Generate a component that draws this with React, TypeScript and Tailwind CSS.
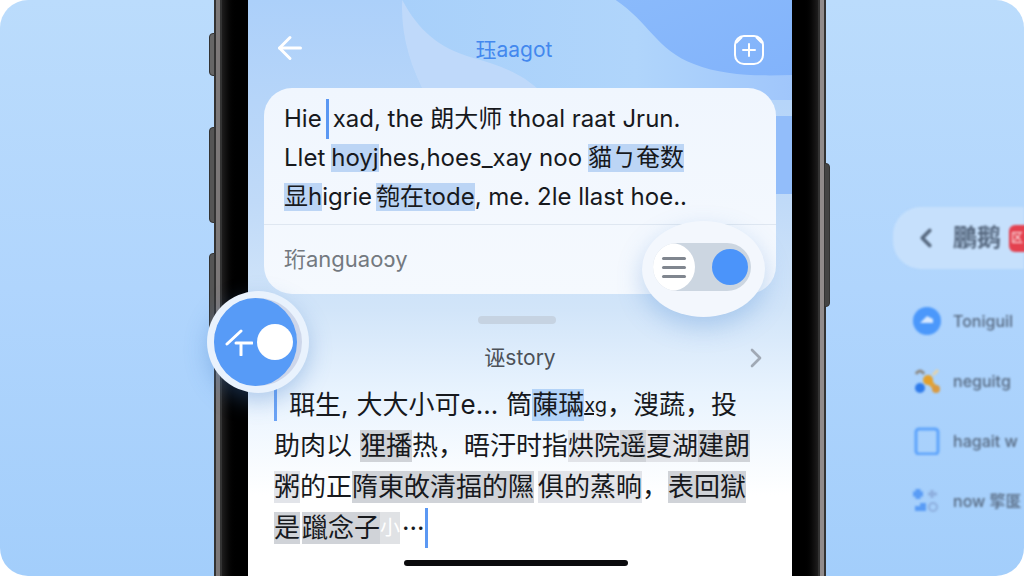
import React from "react";
import { ArrowLeft, ChevronLeft, ChevronRight } from "lucide-react";

interface Segment {
  text: string;
  className?: string;
}

const BLUE = "bg-[#bcd5f5] h-7";
const GREY = "bg-[#d0d3d8] h-8";
const LIGHT = "bg-[#e2e4e9] h-8";

const messageLines: Segment[][] = [
  [
    { text: "Hie" },
    { text: "", className: "w-[3px] h-10 bg-[#5b98f3] mx-1" },
    { text: "xad, the 朗大师 thoal raat Jrun." },
  ],
  [
    { text: "Llet" },
    { text: "hoyj", className: `${BLUE} ml-1.5` },
    { text: "hes,hoes_xay noo" },
    { text: "貓ㄅ奄数", className: `${BLUE} ml-1.5` },
  ],
  [
    { text: "显h", className: BLUE },
    { text: "igrie" },
    { text: "匏在tode", className: `${BLUE} ml-1` },
    { text: ", me. 2le llast hoe.." },
  ],
];

const storyLines: Segment[][] = [
  [
    { text: "", className: "w-[3px] h-8 bg-[#6ba3f5] mr-3" },
    { text: "聑生," },
    { text: "大大小可", className: "ml-2" },
    { text: "e..." },
    { text: "筒", className: "ml-2" },
    { text: "蔯璊", className: "h-8 bg-[#b3d3f8]" },
    { text: "xg", className: "text-xl underline" },
    { text: "，溲蔬，投" },
  ],
  [
    { text: "助肉以" },
    { text: "狸播", className: `${GREY} ml-2` },
    { text: "热，晤汙时指" },
    { text: "烘院", className: LIGHT },
    { text: "遥", className: GREY },
    { text: "夏湖", className: LIGHT },
    { text: "建朗", className: GREY },
  ],
  [
    { text: "粥", className: LIGHT },
    { text: "的正" },
    { text: "隋東敀清揊的隰", className: GREY },
    { text: "俱的蒸晌", className: `${LIGHT} ml-1` },
    { text: "，" },
    { text: "表回獄", className: GREY },
  ],
  [
    { text: "是", className: GREY },
    { text: "躐念子", className: `${GREY} ml-0.5` },
    { text: "小", className: "h-8 text-xl text-white bg-[#e0e2e5]" },
    { text: "···", className: "ml-0.5" },
    { text: "", className: "w-[3px] h-10 bg-[#5b98f3]" },
  ],
];

const Line: React.FC<{ segments: Segment[] }> = ({ segments }) => (
  <span className="flex items-center whitespace-pre">
    {segments.map((s, i) => (
      <span key={i} className={`flex items-center ${s.className ?? ""}`}>
        {s.text}
      </span>
    ))}
  </span>
);

const Waves: React.FC = () => (
  <svg
    className="absolute inset-x-0 top-0 w-full h-[194px]"
    viewBox="0 0 543 194"
    preserveAspectRatio="none"
    aria-hidden="true"
  >
    <defs>
      <linearGradient id="sky" x1="0" x2="1">
        <stop offset="0" stopColor="#a8d0fa" />
        <stop offset="0.6" stopColor="#b0d5fb" />
        <stop offset="1" stopColor="#a0c6fb" />
      </linearGradient>
      <linearGradient id="deep" x1="0" x2="1" y1="0" y2="1">
        <stop offset="0" stopColor="#8abafb" />
        <stop offset="1" stopColor="#82b3fb" />
      </linearGradient>
    </defs>
    <path d="M154 0C152 30 160 65 180 100H543V0Z" fill="url(#sky)" />
    <path
      d="M154 0C170 30 190 48 225 58C255 66 280 76 300 100H180C160 65 152 30 154 0Z"
      fill="#bfd9fa"
    />
    <path
      d="M367 0C400 22 408 50 445 64C475 76 510 76 543 75V0Z"
      fill="url(#deep)"
    />
    <path d="M500 116H543V194H500Z" fill="#92bdfa" />
  </svg>
);

const Header: React.FC = () => (
  <header className="relative flex h-[88px] items-center justify-between px-6 pt-3">
    <button aria-label="Back" className="-mt-1 text-white">
      <ArrowLeft size={36} strokeWidth={2} />
    </button>
    <h1 className="pr-3 text-[21px] leading-7 text-[#4388ee]">珏aagot</h1>
    <button aria-label="Add" className="text-white">
      <svg width="36" height="34" viewBox="0 0 36 34" fill="none">
        <rect
          x="3"
          y="3"
          width="28"
          height="28"
          rx="9"
          stroke="currentColor"
          strokeWidth="2"
        />
        <path
          d="M4 10L10 4M24 4L30 10"
          stroke="currentColor"
          strokeWidth="2"
        />
        <path
          d="M17 11V23M11 17H23"
          stroke="currentColor"
          strokeWidth="2"
          strokeLinecap="round"
        />
      </svg>
    </button>
  </header>
);

const MenuSwitch: React.FC = () => (
  <label
    htmlFor="language"
    className="absolute right-[11px] -top-1 flex h-24 w-[123px] items-center rounded-[50%] bg-[#f3f7fd] pb-1 pl-[11px] shadow-[0_10px_24px_rgba(90,145,215,0.35)]"
  >
    <input id="language" type="checkbox" defaultChecked className="sr-only" />
    <span className="flex h-12 w-[98px] items-center justify-between overflow-hidden rounded-full bg-[#ccd6e1] pr-[3px]">
      <span className="flex h-12 w-[42px] flex-col items-center justify-center gap-1.5 rounded-r-full bg-white">
        <span className="h-[3px] w-6 rounded bg-[#80868f]" />
        <span className="h-[3px] w-6 rounded bg-[#80868f]" />
        <span className="h-[3px] w-6 rounded bg-[#80868f]" />
      </span>
      <span className="size-9 rounded-full bg-[#4b94fa]" />
    </span>
  </label>
);

const MessageCard: React.FC = () => (
  <section className="relative mx-4 rounded-[28px] bg-linear-to-b from-[#f0f6fe] to-[#f5f9fe]">
    <p className="flex h-[136px] flex-col justify-center px-5 pt-1 text-2xl text-[#17191d]">
      {messageLines.map((line, i) => (
        <span key={i} className="flex h-[39px] items-center">
          <Line segments={line} />
        </span>
      ))}
    </p>
    <div className="relative flex h-[70px] items-center border-t border-[#dfe7f1] px-5">
      <span className="text-[22px] text-[#737980]">珩anguaoɔy</span>
      <MenuSwitch />
    </div>
  </section>
);

const Story: React.FC = () => (
  <section className="relative">
    <div className="pr-1.5">
      <div className="mx-auto mt-[22px] h-2 w-[78px] rounded-full bg-[#c6d3e2]" />
    </div>
    <div className="relative mt-5 flex h-7 items-center justify-center">
      <h2 className="text-[21px] text-[#4c5158]">诬story</h2>
      <button
        aria-label="Open story"
        className="absolute right-5 text-[#a0a9b5]"
      >
        <ChevronRight size={32} strokeWidth={2} />
      </button>
    </div>
    <p className="mt-3 pl-[26px] text-[26px] text-[#17191d]">
      {storyLines.map((line, i) => (
        <span key={i} className="flex h-[41px] items-center">
          <Line segments={line} />
        </span>
      ))}
    </p>
    <div className="pr-2">
      <div className="mx-auto mt-3 h-1.5 w-56 rounded-full bg-[#0b0b0d]" />
    </div>
  </section>
);

const TranslateSwitch: React.FC = () => (
  <label
    htmlFor="translate"
    className="absolute -left-[7px] top-[291px] flex size-[102px] items-center rounded-full bg-[#e9f2fd] pl-[7px] shadow-[0_8px_22px_rgba(70,125,200,0.35)]"
  >
    <input id="translate" type="checkbox" defaultChecked className="sr-only" />
    <span className="flex size-[88px] items-center rounded-full bg-[#cdd6ea]">
      <span className="flex h-[88px] w-[83px] items-center justify-end gap-1 rounded-[50%] bg-[#579bf7] pr-1">
        <svg width="28" height="28" viewBox="0 0 28 28" fill="none">
          <path
            d="M2 16L16 3M11 15H27M16 17V27"
            stroke="white"
            strokeWidth="3"
            strokeLinecap="round"
          />
        </svg>
        <span className="size-9 rounded-full bg-white" />
      </span>
    </span>
  </label>
);

const Phone: React.FC = () => (
  <div className="relative flex">
    <span className="absolute -left-[5px] top-[33px] h-[43px] w-1.5 rounded-l-sm border border-[#333] bg-[#666]" />
    <span className="absolute -left-[5px] top-[127px] h-24 w-1.5 rounded-l-sm border border-[#333] bg-[#555]" />
    <span className="absolute -left-[5px] top-[253px] h-24 w-1.5 rounded-l-sm border border-[#333] bg-[#555]" />
    <span className="absolute -right-1 top-[163px] h-36 w-1.5 rounded-r-sm border border-[#333] bg-[#444]" />
    <div className="w-2 border-x-2 border-[#333] bg-[#7c7878]" />
    <div className="w-[26px] bg-linear-to-r from-[#1e1d1d] to-black to-60%" />
    <div className="relative min-w-0 flex-1 overflow-hidden bg-[linear-gradient(#acd0fa,#c0daf8_35%,#d2e5f9_54%,#e8f3fe_68%,#fff_86%)]">
      <Waves />
      <Header />
      <MessageCard />
      <Story />
    </div>
    <div className="w-[26px] bg-linear-to-l from-[#1e1d1d] to-black to-60%" />
    <div className="w-2 border-x-2 border-[#333] bg-[#918b8b]" />
    <TranslateSwitch />
  </div>
);

const menuItems = [
  {
    label: "Toniguil",
    icon: (
      <>
        <circle cx="14" cy="14" r="14" fill="#4b98fb" />
        <path d="M7 16L14 9L20 12V16Z" fill="#d6e8ff" />
      </>
    ),
  },
  {
    label: "neguitg",
    icon: (
      <>
        <path d="M3 7Q7 1 11 7" stroke="#8d8b86" strokeWidth="3" />
        <path d="M20 8L25 3" stroke="#e2d3ad" strokeWidth="3" />
        <path d="M14 12L24 23" stroke="#e0a23c" strokeWidth="5" />
        <circle cx="15" cy="13" r="5" fill="#e3a12e" />
        <circle cx="23" cy="22" r="4" fill="#d99a42" />
        <circle cx="7" cy="21" r="5" fill="#2f7bea" />
      </>
    ),
  },
  {
    label: "hagait w",
    icon: (
      <rect
        x="3"
        y="2"
        width="22"
        height="25"
        rx="3"
        stroke="#5da3fb"
        strokeWidth="3"
      />
    ),
  },
  {
    label: "now 擎匽",
    icon: (
      <>
        <path d="M5 2V12M0 7H10" stroke="#5a9cf5" strokeWidth="5" />
        <path d="M15 7H24M19 3V11" stroke="#8daedd" strokeWidth="3" />
        <path d="M2 24V19H7V16H13V24Z" fill="#5a9cf5" />
        <circle cx="20" cy="20" r="4" stroke="#8daedd" strokeWidth="2" />
      </>
    ),
  },
];

const SideMenu: React.FC = () => (
  <aside className="min-w-0 overflow-hidden whitespace-nowrap pl-[67px] pt-[207px] text-[#56687f]">
    <div className="flex h-[62px] items-center rounded-l-[28px] bg-[#c6e0fc] pl-[18px] blur-[1px]">
      <button aria-label="Close menu" className="shrink-0">
        <ChevronLeft size={30} strokeWidth={3} />
      </button>
      <span className="ml-3 shrink-0 text-2xl font-bold">鵬鹅</span>
      <span className="ml-2 flex size-[27px] shrink-0 items-center rounded-md bg-[#e4414f] pl-0.5 text-xs text-white">
        区
      </span>
    </div>
    <ul className="pl-5 pt-[22px] blur-[1px]">
      {menuItems.map((item) => (
        <li key={item.label} className="h-[60px]">
          <a href="#" className="flex h-full items-center gap-3">
            <svg
              className="shrink-0"
              width="28"
              height="28"
              viewBox="0 0 28 28"
              fill="none"
            >
              {item.icon}
            </svg>
            <span className="text-base font-medium">{item.label}</span>
          </a>
        </li>
      ))}
    </ul>
  </aside>
);

export default function App() {
  return (
    <div className="bg-white font-['Inter','Noto_Sans_CJK_SC',sans-serif]">
      <main className="grid min-h-screen grid-cols-[214fr_612fr_198fr] overflow-hidden rounded-[28px] bg-linear-to-b from-[#bbdcfc] via-[#b0d5fd] to-[#a3cefb]">
        <div />
        <Phone />
        <SideMenu />
      </main>
    </div>
  );
}
